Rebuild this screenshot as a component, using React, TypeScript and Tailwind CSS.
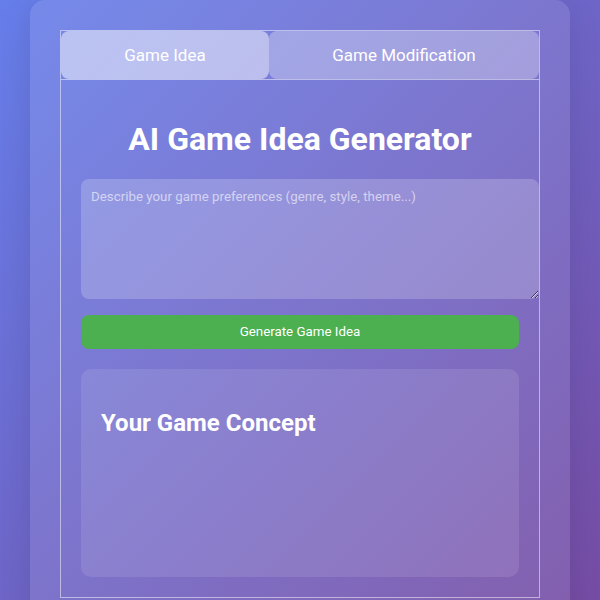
import React from "react";

export default function App() {
  return (
    <div
      className="min-h-screen w-full bg-[linear-gradient(135deg,#667eea_0%,#764ba2_100%)] text-white"
      style={{ fontFamily: "Roboto, 'Noto Sans', sans-serif" }}
    >
      <div className="mx-auto w-[540px] rounded-[15px] bg-white/10 p-[30px] shadow-[0_8px_32px_rgba(0,0,0,0.1)]">
        <div className="border border-white/50">
          <div className="flex border-b border-white/50">
            <button className="flex-auto rounded-[8px] bg-white/50 py-[15px] text-[17px] leading-[18px] text-white">
              Game Idea
            </button>
            <button className="flex-auto rounded-[8px] bg-white/30 py-[15px] text-[17px] leading-[18px] text-white">
              Game Modification
            </button>
          </div>
          <div className="p-[20px]">
            <h1 className="my-[21px] text-center text-[32px] font-bold leading-[37px]">
              AI Game Idea Generator
            </h1>
            <textarea
              className="mb-[16px] block h-[100px] w-full box-content rounded-[8px] border-0 bg-white/20 px-[10px] py-[10px] text-[13.33px] leading-[16px] text-white outline-none placeholder:text-white/60"
              placeholder="Describe your game preferences (genre, style, theme...)"
            />
            <button className="block h-[34px] w-full rounded-[8px] bg-[#4CAF50] text-[13.33px] text-white">
              Generate Game Idea
            </button>
            <div className="mt-[20px] min-h-[208px] rounded-[10px] bg-white/10 p-[20px]">
              <h2 className="mt-[20px] text-[24px] font-bold leading-[28px]">
                Your Game Concept
              </h2>
            </div>
          </div>
        </div>
      </div>
    </div>
  );
}
